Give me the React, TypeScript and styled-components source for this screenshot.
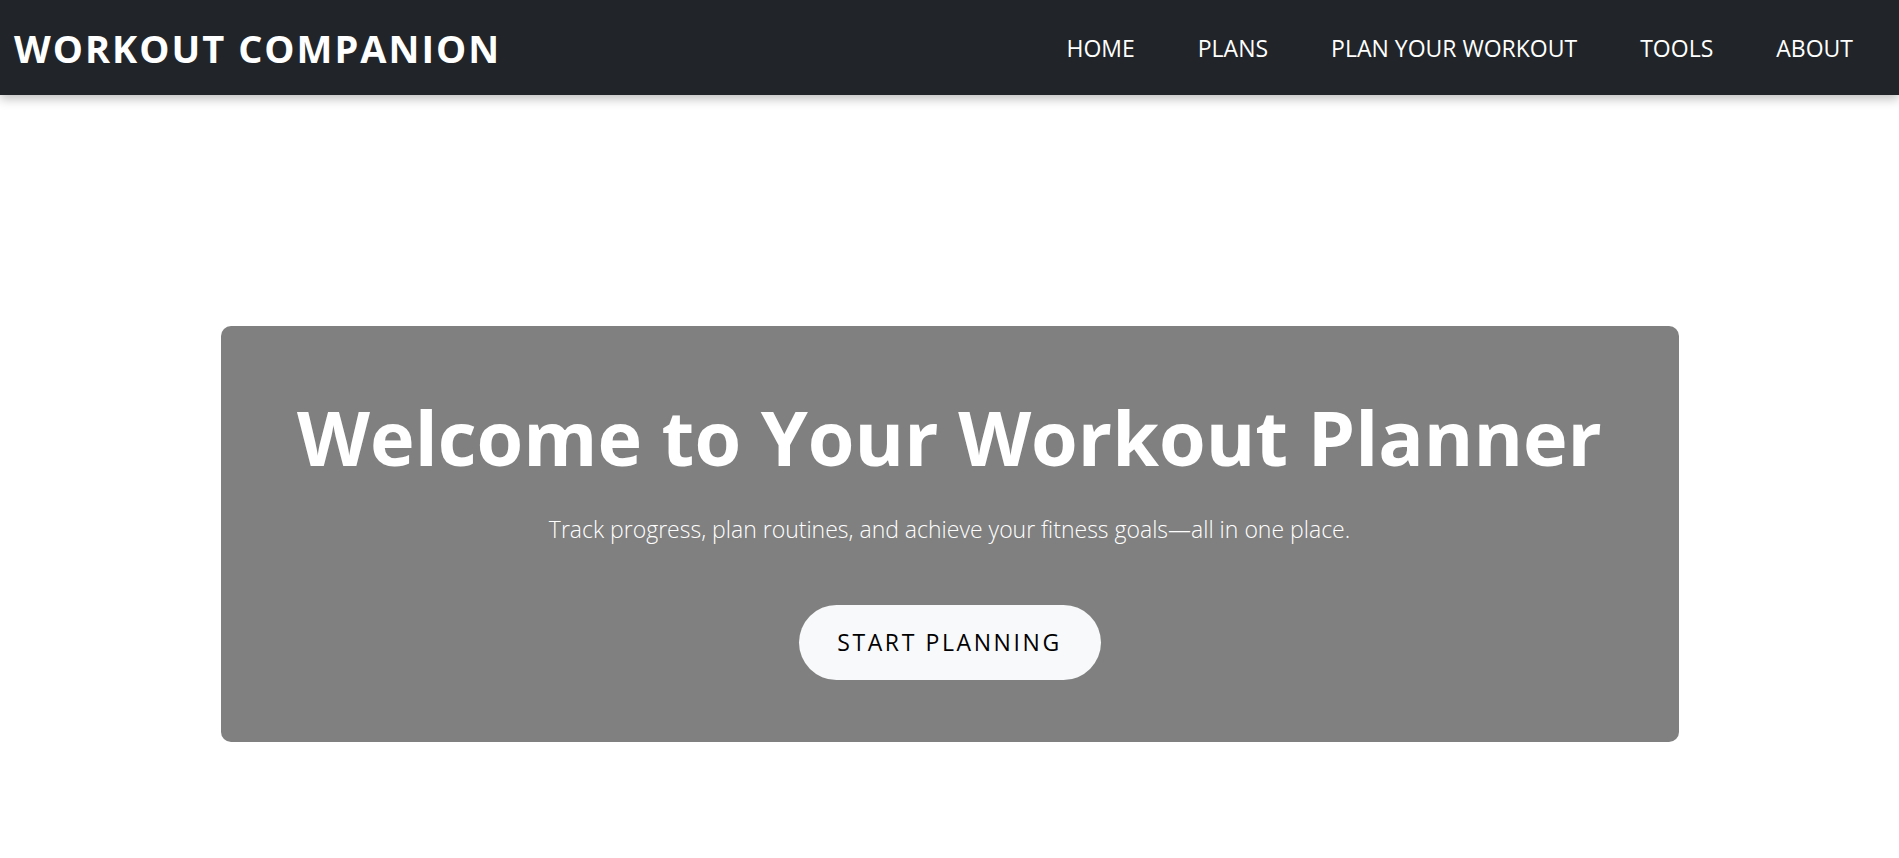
import styled, { createGlobalStyle } from 'styled-components';

const GlobalStyle = createGlobalStyle`
  * {
    box-sizing: border-box;
  }
  body {
    margin: 0;
    background: #ffffff;
    font-family: 'Open Sans', 'Noto Sans', sans-serif;
  }
`;

const Navbar = styled.nav`
  align-items: center;
  background-color: #212529;
  box-shadow: 0 4px 10px rgba(0, 0, 0, 0.25);
  display: flex;
  height: 95px;
  justify-content: space-between;
  padding: 0 46px 0 14px;
  position: relative;
`;

const Brand = styled.a`
  color: #ffffff;
  font-size: 38px;
  font-weight: 700;
  letter-spacing: 2px;
  text-decoration: none;
`;

const NavList = styled.ul`
  display: flex;
  gap: 63px;
  list-style: none;
  margin: 0;
  padding: 0;
`;

const NavLink = styled.a`
  color: #ffffff;
  font-size: 23px;
  font-weight: 400;
  text-decoration: none;
`;

const Main = styled.main`
  display: flex;
  justify-content: center;
  padding: 231px 0 117px;
`;

const Hero = styled.section`
  align-items: center;
  background-color: #808080;
  border-radius: 10px;
  color: #ffffff;
  display: flex;
  flex-direction: column;
  padding: 66px 20px 62px;
  width: 1458px;
`;

const Title = styled.h1`
  font-size: 75.5px;
  font-weight: 700;
  line-height: 1.2;
  margin: 0;
`;

const Subtitle = styled.p`
  font-size: 23px;
  font-weight: 300;
  margin: 30px 0 0;
`;

const StartButton = styled.button`
  background-color: #f8f9fa;
  border: none;
  border-radius: 40px;
  color: #000000;
  cursor: pointer;
  font-family: inherit;
  font-size: 23px;
  height: 75px;
  letter-spacing: 2.6px;
  margin-top: 60px;
  width: 302px;
`;

const links = ['HOME', 'PLANS', 'PLAN YOUR WORKOUT', 'TOOLS', 'ABOUT'];

function App() {
  return (
    <>
      <GlobalStyle />
      <Navbar>
        <Brand href="#">WORKOUT COMPANION</Brand>
        <NavList>
          {links.map((link) => (
            <li key={link}>
              <NavLink href="#">{link}</NavLink>
            </li>
          ))}
        </NavList>
      </Navbar>
      <Main>
        <Hero>
          <Title>Welcome to Your Workout Planner</Title>
          <Subtitle>Track progress, plan routines, and achieve your fitness goals—all in one place.</Subtitle>
          <StartButton>START PLANNING</StartButton>
        </Hero>
      </Main>
    </>
  );
}

export default App;
